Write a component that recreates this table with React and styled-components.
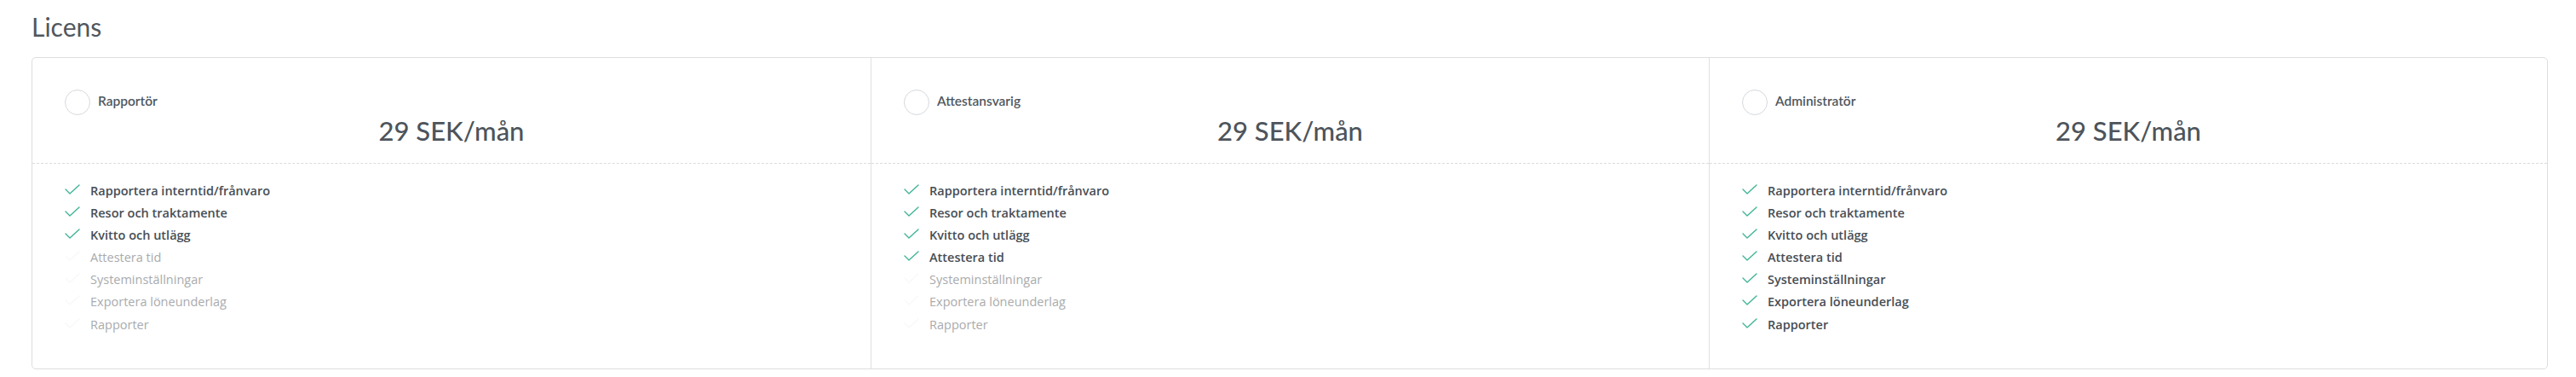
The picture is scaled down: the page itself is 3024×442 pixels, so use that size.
import React from 'react'
import styled, { createGlobalStyle } from 'styled-components'

const GlobalStyle = createGlobalStyle`
  html, body {
    margin: 0;
    padding: 0;
    background: #ffffff;
    font-family: Lato, "Open Sans", Arial, sans-serif;
  }
`

const plans = [
    { name: 'Rapportör', price: '29 SEK/mån', enabled: 3 },
    { name: 'Attestansvarig', price: '29 SEK/mån', enabled: 4 },
    { name: 'Administratör', price: '29 SEK/mån', enabled: 7 },
]

const features = [
    'Rapportera interntid/frånvaro',
    'Resor och traktamente',
    'Kvitto och utlägg',
    'Attestera tid',
    'Systeminställningar',
    'Exportera löneunderlag',
    'Rapporter',
]

function CheckIcon({ faded }) {
    return (
        <svg width="18" height="12" viewBox="0 0 18 12" fill="none">
            <polyline
                points="1,6 6,11 17,1"
                stroke={faded ? '#f8f8f8' : '#41b496'}
                strokeWidth="1.4"
                strokeLinecap="round"
                strokeLinejoin="round"
            />
        </svg>
    )
}

export default function App() {
    return (
        <Page>
            <GlobalStyle />
            <Title>Licens</Title>
            <Card>
                {plans.map(plan => (
                    <Column key={plan.name}>
                        <Header>
                            <RadioRow>
                                <Radio />
                                <PlanName>{plan.name}</PlanName>
                            </RadioRow>
                            <Price>{plan.price}</Price>
                        </Header>
                        <FeatureList>
                            {features.map((f, i) => (
                                <Feature key={f} $on={i < plan.enabled}>
                                    <CheckBox>
                                        <CheckIcon faded={i >= plan.enabled} />
                                    </CheckBox>
                                    {f}
                                </Feature>
                            ))}
                        </FeatureList>
                    </Column>
                ))}
            </Card>
        </Page>
    )
}

const Page = styled.div`
    padding: 14px 33px 10px 37px;
    box-sizing: border-box;
    width: 3024px;
`

const Title = styled.h2`
    margin: 0 0 18px 0;
    font-size: 30px;
    line-height: 35px;
    font-weight: 400;
    color: #50575e;
`

const Card = styled.div`
    display: grid;
    grid-template-columns: repeat(3, 1fr);
    border: 1px solid #dedede;
    border-radius: 5px;
    height: 366px;
    box-sizing: border-box;
`

const Column = styled.div`
    display: flex;
    flex-direction: column;
    & + & {
        border-left: 1px solid #e0e0e0;
    }
`

const Header = styled.div`
    height: 124px;
    box-sizing: border-box;
    padding: 37px 38px 0 38px;
    border-bottom: 1px dashed #dcdcdc;
`

const RadioRow = styled.div`
    display: flex;
    align-items: center;
    gap: 9px;
    height: 30px;
`

const Radio = styled.span`
    width: 30px;
    height: 30px;
    box-sizing: border-box;
    border: 1px solid #d5d9de;
    border-radius: 50%;
    background: #fff;
    flex-shrink: 0;
`

const PlanName = styled.span`
    font-size: 15.5px;
    font-weight: 600;
    color: #50575e;
    margin-top: -4px;
`

const Price = styled.div`
    text-align: center;
    font-size: 31px;
    line-height: 36px;
    font-weight: 500;
    color: #4d545b;
`

const FeatureList = styled.ul`
    list-style: none;
    margin: 0;
    padding: 18px 38px 0 38px;
`

const Feature = styled.li`
    display: flex;
    align-items: center;
    height: 26.17px;
    font-family: "Open Sans", Lato, Arial, sans-serif;
    font-size: 14.5px;
    font-weight: ${p => (p.$on ? 600 : 400)};
    color: ${p => (p.$on ? '#474e55' : '#a9abad')};
`

const CheckBox = styled.span`
    display: flex;
    width: 30px;
    margin-top: -3px;
`
